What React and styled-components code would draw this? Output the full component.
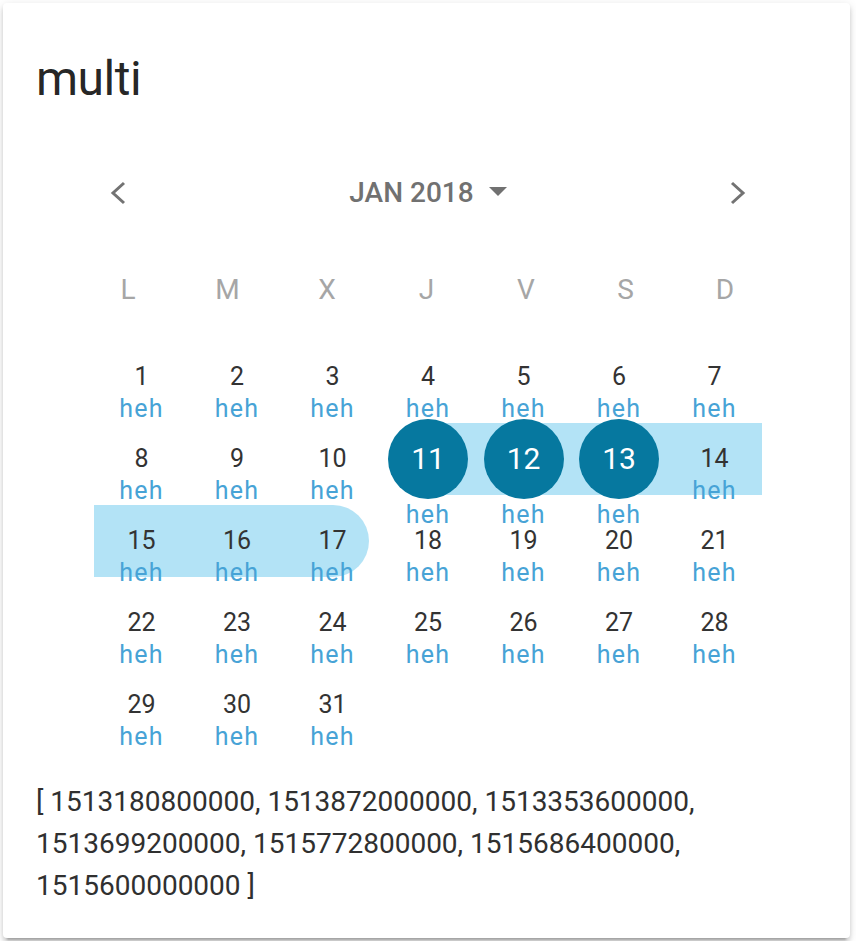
import React from "react";
import styled, { createGlobalStyle } from "styled-components";

const GlobalStyle = createGlobalStyle`
  body {
    margin: 0;
    background: #fff;
    font-family: Roboto, "Liberation Sans", Arial, sans-serif;
  }
`;

const Page = styled.div`
  padding: 3px;
`;

const Card = styled.div`
  position: relative;
  z-index: 0;
  box-sizing: border-box;
  width: 847px;
  padding: 47.5px 31px 30.6px;
  background: #fff;
  border-radius: 4px;
  box-shadow: 0 4px 4px rgba(0, 0, 0, 0.14), 0 2px 10px rgba(0, 0, 0, 0.12),
    0 6px 2px -4px rgba(0, 0, 0, 0.2);
`;

const Title = styled.h1`
  margin: 0;
  padding-left: 2px;
  font-size: 48px;
  font-weight: 400;
  line-height: 56px;
  letter-spacing: -0.5px;
  color: rgba(0, 0, 0, 0.87);
`;

const Header = styled.div`
  width: 668px;
  height: 48px;
  margin: 62.5px auto 0;
  padding-left: 3px;
  display: flex;
  align-items: center;
  justify-content: space-between;
`;

const NavButton = styled.button`
  width: 48px;
  height: 48px;
  padding: 0;
  border: 0;
  background: none;
  color: #737373;
  display: flex;
  align-items: center;
  justify-content: center;
`;

const Month = styled.div`
  display: flex;
  align-items: center;
  font-size: 28px;
  font-weight: 500;
  line-height: 48px;
  color: #717171;

  svg {
    margin-left: 15px;
    margin-bottom: 4px;
  }
`;

const Weekdays = styled.div`
  display: grid;
  grid-template-columns: repeat(7, 99.5px);
  justify-content: center;
  margin-top: 53.4px;
  font-size: 28px;
  line-height: 40px;
  color: #a6a6a6;
  text-align: center;
`;

const Days = styled.div`
  display: grid;
  grid-template-columns: repeat(7, 95.5px);
  row-gap: 18px;
  justify-content: center;
  margin: 50.6px 0 0 3px;
`;

const Cell = styled.div`
  position: relative;
  height: 64px;
  display: flex;
  flex-direction: column;
  align-items: center;
`;

// range highlight lying under the day content
const Band = styled.span`
  position: absolute;
  top: -20px;
  height: 72px;
  left: ${(p) => (p.$kind === "start" ? "50%" : "0")};
  right: ${(p) => (p.$kind === "end" ? "calc(50% - 36px)" : "0")};
  border-radius: ${(p) => (p.$kind === "end" ? "0 36px 36px 0" : "0")};
  background: #b3e3f6;
  z-index: 0;
`;

const DayNum = styled.div`
  position: relative;
  z-index: 1;
  flex-shrink: 0;
  display: flex;
  align-items: center;
  justify-content: center;
  height: 32px;
  font-size: 25px;
  color: #333;

  ${(p) =>
    p.$selected &&
    `
    width: 80px;
    height: 80px;
    margin-top: -24px;
    border-radius: 50%;
    background: #06789f;
    color: #fff;
    font-size: 30px;
  `}
`;

const Event = styled.div`
  position: relative;
  z-index: 1;
  flex-shrink: 0;
  font-size: 25px;
  line-height: 32px;
  letter-spacing: 1.2px;
  color: #47a3d6;
`;

const Output = styled.p`
  margin: 28.4px 0 0;
  padding-left: 2px;
  font-size: 28px;
  line-height: 42px;
  color: #303030;
`;

const ChevronLeft = () => (
  <svg width="48" height="48" viewBox="0 0 48 48">
    <polyline points="30,14 19,24 30,34" fill="none" stroke="currentColor" strokeWidth="3" />
  </svg>
);

const ChevronRight = () => (
  <svg width="48" height="48" viewBox="0 0 48 48">
    <polyline points="18,14 29,24 18,34" fill="none" stroke="currentColor" strokeWidth="3" />
  </svg>
);

const weekdays = ["L", "M", "X", "J", "V", "S", "D"];
const selected = [11, 12, 13];
const bands = { 11: "start", 12: "full", 13: "full", 14: "full", 15: "full", 16: "full", 17: "end" };
const value = [1513180800000, 1513872000000, 1513353600000, 1513699200000, 1515772800000, 1515686400000, 1515600000000];

export default function App() {
  const days = Array.from({ length: 31 }, (_, i) => i + 1);

  return (
    <>
      <GlobalStyle />
      <Page>
        <Card>
          <Title>multi</Title>

          <Header>
            <NavButton>
              <ChevronLeft />
            </NavButton>
            <Month>
              JAN 2018
              <svg width="18" height="9" viewBox="0 0 18 9">
                <polygon points="0,0 18,0 9,9" fill="currentColor" />
              </svg>
            </Month>
            <NavButton>
              <ChevronRight />
            </NavButton>
          </Header>

          <Weekdays>
            {weekdays.map((d) => (
              <div key={d}>{d}</div>
            ))}
          </Weekdays>

          <Days>
            {days.map((d) => (
              <Cell key={d}>
                {bands[d] && <Band $kind={bands[d]} />}
                <DayNum $selected={selected.includes(d)}>{d}</DayNum>
                <Event>heh</Event>
              </Cell>
            ))}
          </Days>

          <Output>{`[ ${value.join(", ")} ]`}</Output>
        </Card>
      </Page>
    </>
  );
}
